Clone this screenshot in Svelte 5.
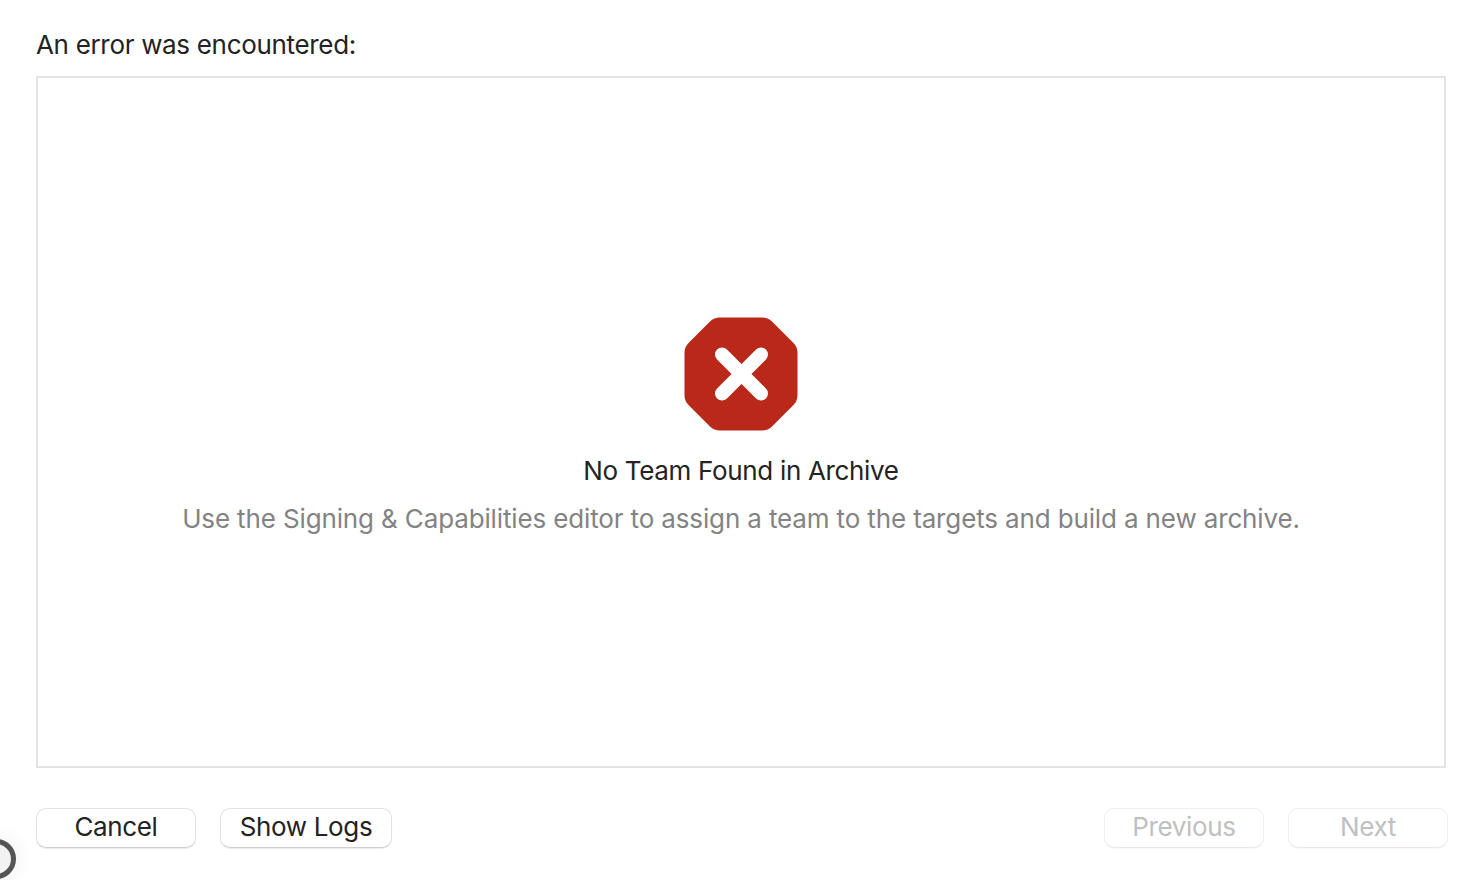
<script lang="ts">
  /* Archive upload error step: heading, bordered message panel, footer actions. */
  const title = 'No Team Found in Archive'
  const detail = 'Use the Signing & Capabilities editor to assign a team to the targets and build a new archive.'
</script>

<div class="sheet">
  <h1 class="heading">An error was encountered:</h1>

  <section class="panel">
    <svg class="stop" width="114" height="114" viewBox="0 0 114 114" aria-hidden="true">
      <path
        d="M36 .5H78Q84 .5 88 4.500L109.500 26Q113.500 30 113.500 36V78Q113.500 84 109.500 88L88 109.500Q84 113.500 78 113.500H36Q30 113.500 26 109.500L4.500 88Q.5 84 .5 78V36Q.5 30 4.500 26L26 4.500Q30 .5 36 .5Z"
        fill="#b92818"
      />
      <path d="M38 37.500L77 76.500M77 37.500L38 76.500" stroke="#fff" stroke-width="14" stroke-linecap="round" />
    </svg>
    <h2 class="title">{title}</h2>
    <p class="detail">{detail}</p>
  </section>

  <footer class="actions">
    <div class="group left">
      <button class="btn">Cancel</button>
      <button class="btn logs">Show Logs</button>
    </div>
    <div class="group">
      <button class="btn" disabled>Previous</button>
      <button class="btn" disabled>Next</button>
    </div>
  </footer>

  <div class="cursor"></div>
</div>

<style>
  :global(body) {
    background: #fff;
  }
  .sheet {
    position: relative;
    box-sizing: border-box;
    height: 880px;
    overflow: hidden;
    padding: 28px 20px 0 36px;
    background: #fff;
    font-family: Inter, "Liberation Sans", sans-serif;
    color: #232323;
  }
  .heading {
    margin: 0;
    height: 48px;
    font-size: 26px;
    line-height: 34px;
    font-weight: 400;
    letter-spacing: -0.32px;
  }
  .panel {
    box-sizing: border-box;
    height: 692px;
    margin-right: 2px;
    padding-top: 239px;
    border: 2px solid #e3e3e3;
    display: flex;
    flex-direction: column;
    align-items: center;
  }
  .stop {
    display: block;
  }
  .title {
    margin: 23px 0 0;
    font-size: 26px;
    line-height: 34px;
    font-weight: 400;
    letter-spacing: -0.33px;
  }
  .detail {
    margin: 14px 0 0;
    font-size: 26px;
    line-height: 34px;
    letter-spacing: -0.137px;
    color: #838383;
  }
  .actions {
    display: flex;
    justify-content: space-between;
    margin-top: 40px;
  }
  .group {
    display: flex;
    gap: 24px;
  }
  .btn {
    box-sizing: border-box;
    width: 160px;
    height: 40px;
    padding: 0 0 3px;
    border: 1px solid #e2e2e2;
    border-bottom-color: #cfcfcf;
    border-radius: 10px;
    background: #fff;
    font: inherit;
    font-size: 26px;
    line-height: 34px;
    letter-spacing: -0.35px;
    color: #232323;
    box-shadow: 0 1px 1px rgba(0, 0, 0, 0.08);
  }
  .btn.logs {
    width: 172px;
  }
  .btn:disabled {
    color: #c0c0c0;
    border-color: #efefef;
    border-bottom-color: #e8e8e8;
    box-shadow: 0 1px 1px rgba(0, 0, 0, 0.03);
  }
  .cursor {
    position: absolute;
    left: -24px;
    top: 839px;
    box-sizing: border-box;
    width: 40px;
    height: 40px;
    border: 5.500px solid #555;
    border-radius: 50%;
    background: #f2f2f2;
    box-shadow: 0 0 14px 8px rgba(0, 0, 0, 0.03);
  }
</style>
